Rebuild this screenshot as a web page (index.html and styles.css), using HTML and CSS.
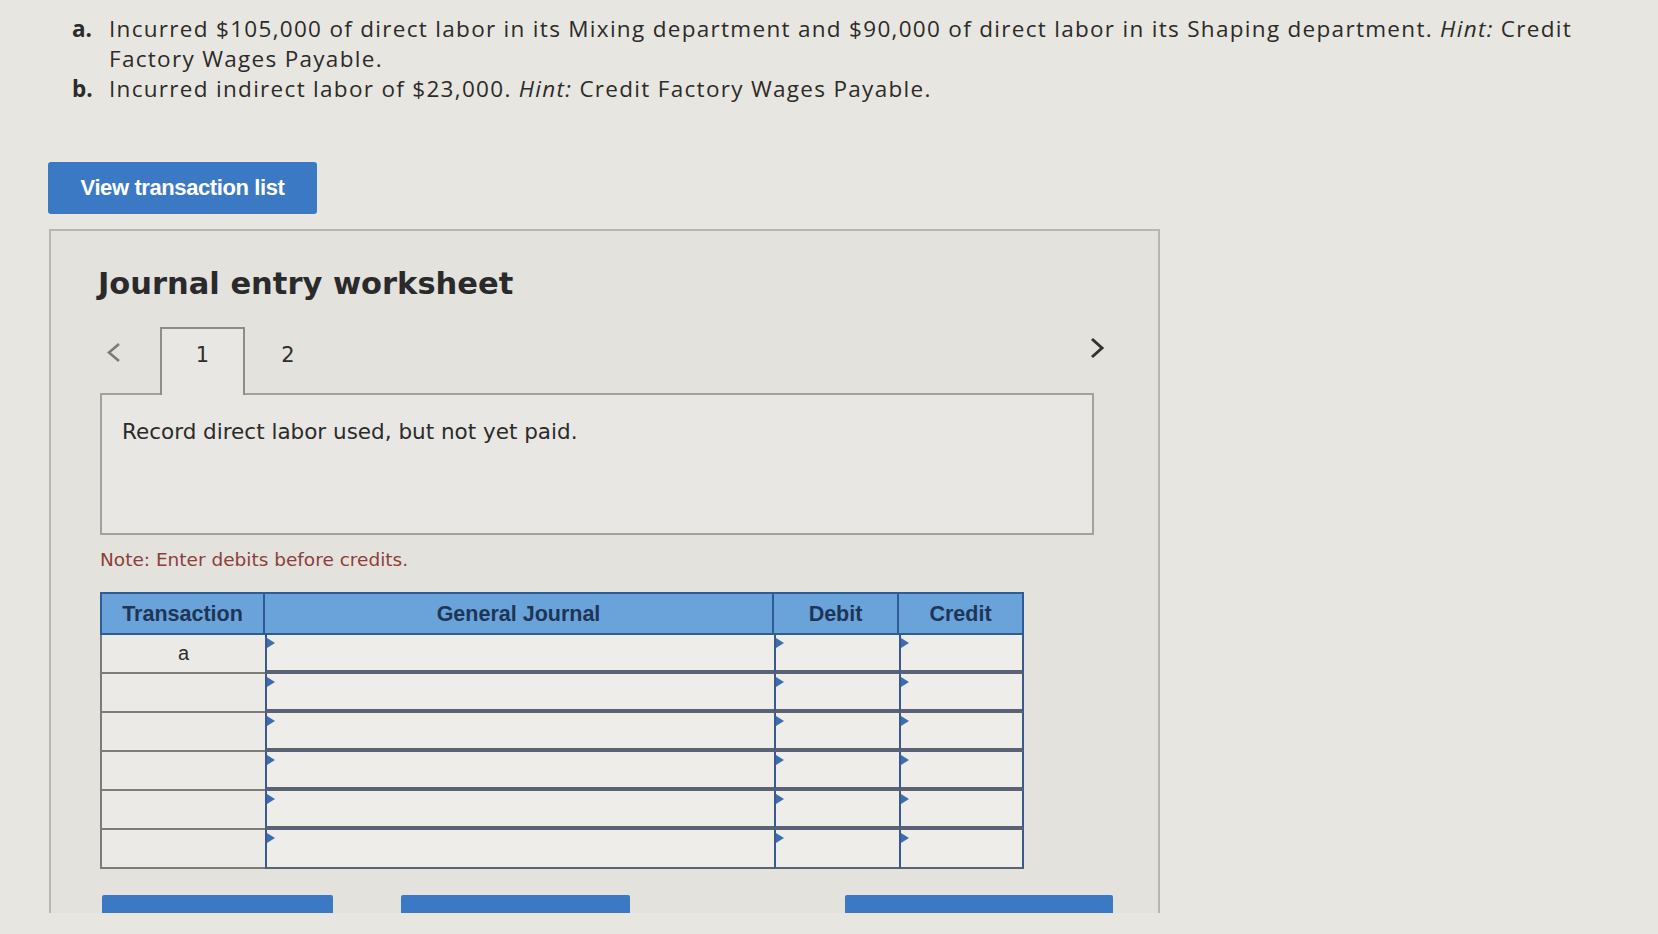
FILE: index.html
```html
<!DOCTYPE html>
<html lang="en">
<head>
  <meta charset="UTF-8"/>
  <title>Journal entry worksheet</title>
  <link rel="stylesheet" href="styles.css">
</head>
<body>

<div class="question">
  <div class="item">
    <span class="mark">a.</span>
    <span class="text">Incurred $105,000 of direct labor in its Mixing department and $90,000 of direct labor in its Shaping department. <em>Hint:</em> Credit<br/>Factory Wages Payable.</span>
  </div>
  <div class="item">
    <span class="mark">b.</span>
    <span class="text">Incurred indirect labor of $23,000. <em>Hint:</em> Credit Factory Wages Payable.</span>
  </div>
</div>

<button class="view-btn">View transaction list</button>

<div class="panel">
  <h2>Journal entry worksheet</h2>

  <div class="tabs">
    <span class="prev">
      <svg width="16" height="21" viewBox="0 0 16 21"><polyline points="13,2 3,10.5 13,19" fill="none" stroke="#7c7b78" stroke-width="2.6"/></svg>
    </span>
    <span class="tab active">1</span>
    <span class="tab">2</span>
    <span class="next">
      <svg width="16" height="22" viewBox="0 0 16 22"><polyline points="3,2 13,11 3,20" fill="none" stroke="#34332f" stroke-width="3"/></svg>
    </span>
  </div>

  <div class="entry">Record direct labor used, but not yet paid.</div>

  <p class="note">Note: Enter debits before credits.</p>

  <table class="journal">
    <thead>
      <tr>
        <th class="c-trans">Transaction</th>
        <th class="c-gj">General Journal</th>
        <th class="c-num">Debit</th>
        <th class="c-num">Credit</th>
      </tr>
    </thead>
    <tbody>
      <tr><td class="trans">a</td><td class="inp"></td><td class="inp"></td><td class="inp"></td></tr>
      <tr><td class="trans"></td><td class="inp"></td><td class="inp"></td><td class="inp"></td></tr>
      <tr><td class="trans"></td><td class="inp"></td><td class="inp"></td><td class="inp"></td></tr>
      <tr><td class="trans"></td><td class="inp"></td><td class="inp"></td><td class="inp"></td></tr>
      <tr><td class="trans"></td><td class="inp"></td><td class="inp"></td><td class="inp"></td></tr>
      <tr><td class="trans"></td><td class="inp"></td><td class="inp"></td><td class="inp"></td></tr>
    </tbody>
  </table>

  <div class="actions">
    <span class="act act-record"></span>
    <span class="act act-clear"></span>
    <span class="act act-view"></span>
  </div>
</div>

</body>
</html>
```

FILE: styles.css
```css
body {
  margin: 0;
  background-color: #e8e6e1;
  font-family: "Open Sans", sans-serif;
  color: #2c2b29;
  overflow: hidden;
}

/* question text */
.question {
  padding: 14px 60px 0 72px;
}
.item {
  display: flex;
  font-size: 22.5px;
  line-height: 30px;
  letter-spacing: 1.3px;
}
.mark {
  flex: 0 0 37px;
  font-weight: bold;
  letter-spacing: 0;
}
.text em {
  font-style: italic;
}

.view-btn {
  display: block;
  margin: 58px 0 0 48px;
  width: 269px;
  height: 52px;
  background: #3c79c5;
  color: #fff;
  border: none;
  border-radius: 3px;
  font-family: "Liberation Sans", Arial, sans-serif;
  font-weight: bold;
  font-size: 22px;
  letter-spacing: -0.4px;
}

/* worksheet panel */
.panel {
  margin: 15px 0 0 49px;
  width: 1111px;
  height: 684px;
  box-sizing: border-box;
  border: 2px solid #b8b6b1;
  border-bottom: none;
  background: #e4e2dd;
  padding: 0 0 0 49px;
  overflow: hidden;
  font-family: "DejaVu Sans", Verdana, sans-serif;
}
.panel h2 {
  margin: 35px 0 0 -2px;
  font-size: 30.5px;
  line-height: 36px;
  font-weight: bold;
  color: #2a2a2c;
}

.tabs {
  display: flex;
  width: 1005px;
  height: 66px;
  margin-top: 25px;
  position: relative;
  z-index: 1;
}
.prev {
  width: 54px;
  padding: 15px 0 0 6px;
}
.tab {
  width: 86px;
  box-sizing: border-box;
  padding-top: 15px;
  text-align: center;
  font-size: 21px;
  line-height: 26px;
  color: #2f2e2c;
}
.tab.active {
  width: 85px;
  height: 68px;
  border: 2px solid #8f8d89;
  border-bottom: none;
  background: #e9e7e3;
  padding-top: 13px;
}
.next {
  margin-left: auto;
  padding-top: 10px;
}

.entry {
  width: 994px;
  height: 142px;
  box-sizing: border-box;
  border: 2px solid #a3a19c;
  background: #e9e7e3;
  padding: 24px 0 0 20px;
  font-size: 21.5px;
  line-height: 26px;
  color: #2c2b2a;
}

.note {
  margin: 14px 0 0;
  font-size: 18.5px;
  line-height: 22px;
  color: #8c3e3c;
}

/* journal table */
.journal {
  margin-top: 21px;
  border-collapse: separate;
  border-spacing: 0;
  font-family: "Liberation Sans", Arial, sans-serif;
}
.journal th {
  height: 43px;
  box-sizing: border-box;
  background: #6aa2da;
  color: #1e3656;
  font-size: 21.5px;
  font-weight: bold;
  text-align: center;
  padding: 2px 0 0;
  border-top: 2px solid #2e5d96;
  border-right: 2px solid #2e5d96;
  border-bottom: 2px solid #2e5d96;
}
.journal th.c-trans {
  width: 165px;
  border-left: 2px solid #2e5d96;
}
.journal th.c-gj {
  width: 509px;
}
.journal th.c-num {
  width: 125px;
}
.journal td {
  height: 39px;
  box-sizing: border-box;
  padding: 0;
}
.journal td.trans {
  background: #eceae6;
  border-left: 2px solid #7d7c79;
  border-bottom: 2px solid #7d7c79;
  text-align: center;
  font-size: 20px;
  color: #2e2d2b;
}
.journal td.inp {
  position: relative;
  background: #efede9;
  border-left: 2px solid #3a5a8c;
  border-bottom: 4px solid #5c6276;
}
.journal td.inp:last-child {
  border-right: 2px solid #3a5a8c;
}
.journal tr:last-child td.inp {
  border-bottom-width: 2px;
}
.journal td.inp::before {
  content: "";
  position: absolute;
  left: 0;
  top: 3px;
  border-top: 5px solid transparent;
  border-bottom: 5px solid transparent;
  border-left: 8px solid #3b6db0;
}

/* bottom buttons, clipped by the panel */
.actions {
  display: flex;
  margin: 26px 0 0 2px;
}
.act {
  height: 40px;
  background: #3c79c5;
  border-radius: 2px;
}
.act-record {
  width: 231px;
}
.act-clear {
  width: 229px;
  margin-left: 68px;
}
.act-view {
  width: 268px;
  margin-left: 215px;
}
```
